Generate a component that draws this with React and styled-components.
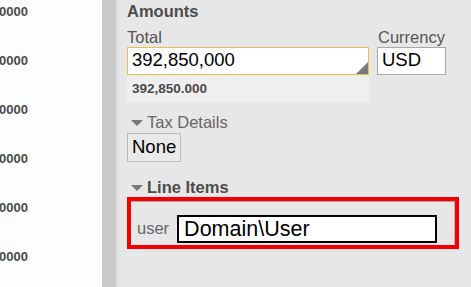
import React from "react"
import styled, { createGlobalStyle } from "styled-components"

const Global = createGlobalStyle`
  html, body {
    margin: 0;
    padding: 0;
    background: #e7e7e7;
  }
  body {
    font-family: "Liberation Sans", Arial, sans-serif;
  }
`

const Page = styled.div`
  display: flex;
  width: 471px;
  height: 287px;
  overflow: hidden;
`

const Grid = styled.div`
  width: 102px;
  flex-shrink: 0;
  background: #fdfdfd;
  overflow: hidden;
`

const GridList = styled.div`
  margin-top: -13px;
`

const GridCell = styled.div`
  width: 28px;
  height: 49px;
  display: flex;
  justify-content: flex-end;
  align-items: center;
  white-space: nowrap;
  font-size: 13px;
  font-weight: bold;
  color: #4a4a4a;
`

const Splitter = styled.div`
  width: 14px;
  flex-shrink: 0;
  background: #cacaca;
  border-right: 3px solid #dedede;
`

const Panel = styled.div`
  flex: 1;
  padding: 2px 0 0 8px;
  background: #e7e7e7;
`

const Heading = styled.div`
  font-size: 16.5px;
  line-height: 19px;
  font-weight: bold;
  color: #4c4c4c;
  display: flex;
  align-items: center;
`

const Label = styled.div`
  font-size: 16.5px;
  line-height: 19px;
  color: ${(p) => p.$color || "#555"};
  padding-left: ${(p) => p.$indent || 0}px;
`

const Row = styled.div`
  display: flex;
  gap: 8px;
  margin-top: 7px;
`

const Field = styled.div`
  display: flex;
  flex-direction: column;
  width: ${(p) => p.$width}px;
`

const Box = styled.div`
  position: relative;
  height: 28px;
  box-sizing: border-box;
  background: #fff;
  border: 1px solid ${(p) => p.$border};
  padding: 0 0 2px 4px;
  font-size: 18.5px;
  line-height: 24px;
  color: #000;
`

const Corner = styled.div`
  position: absolute;
  right: 0;
  bottom: 0;
  width: 0;
  height: 0;
  border-style: solid;
  border-width: 0 0 12px 12px;
  border-color: transparent transparent #7a7a7a transparent;
`

const Hint = styled.div`
  margin-top: 1px;
  height: 26px;
  background: #efefef;
  padding-left: 5px;
  font-size: 13.5px;
  line-height: 26px;
  font-weight: bold;
  color: #4a4a4a;
`

const Section = styled.div`
  display: flex;
  align-items: center;
  margin-top: ${(p) => p.$top}px;
`

const Caret = styled.span`
  display: inline-block;
  width: 0;
  height: 0;
  margin: 1px 4px 0 4px;
  border-style: solid;
  border-width: 6px 6.5px 0 6.5px;
  border-color: #777 transparent transparent transparent;
`

const Chip = styled.div`
  display: inline-block;
  height: 29px;
  box-sizing: border-box;
  margin-top: 1px;
  padding: 0 4px 1px 4px;
  border: 1px solid #bdbdbd;
  background: #e9e9e9;
  font-size: 18.5px;
  line-height: 26px;
  color: #000;
`

const Highlight = styled.div`
  width: 332px;
  height: 52px;
  box-sizing: border-box;
  border: 4px solid #f40000;
  box-shadow: inset 0 1px 0 #a8a8a8, inset -1px 0 0 #b8b8b8;
  display: flex;
  align-items: center;
  gap: 8px;
  padding: 11px 0 0 6px;
`

const UserInput = styled.div`
  width: 260px;
  height: 28px;
  box-sizing: border-box;
  border: 2px solid #000;
  background: #fff;
  padding-left: 5px;
  font-size: 21.5px;
  line-height: 24px;
  color: #000;
`

const rows = [1, 2, 3, 4, 5, 6]

export default function App() {
  return (
    <Page>
      <Global />
      <Grid>
        <GridList>
          {rows.map((r) => (
            <GridCell key={r}>0000</GridCell>
          ))}
        </GridList>
      </Grid>
      <Splitter />
      <Panel>
        <Heading>Amounts</Heading>
        <Row>
          <Field $width={242}>
            <Label>Total</Label>
            <Box $border="#e6bf52">
              392,850,000
              <Corner />
            </Box>
            <Hint>392,850.000</Hint>
          </Field>
          <Field $width={69}>
            <Label $indent={1}>Currency</Label>
            <Box $border="#a9a9a9">USD</Box>
          </Field>
        </Row>
        <Section $top={11}>
          <Caret />
          <Label $color="#666">Tax Details</Label>
        </Section>
        <Chip>None</Chip>
        <Section $top={16}>
          <Caret />
          <Heading>Line Items</Heading>
        </Section>
        <Highlight>
          <Label $color="#666">user</Label>
          <UserInput>Domain\User</UserInput>
        </Highlight>
      </Panel>
    </Page>
  )
}
